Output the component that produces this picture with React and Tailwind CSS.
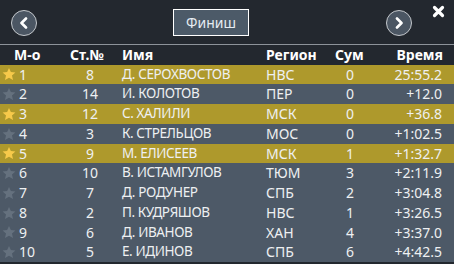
import React from "react";

const rows = [
  { p: 1, n: 8, name: "Д. СЕРОХВОСТОВ", reg: "НВС", sum: 0, time: "25:55.2", gold: true },
  { p: 2, n: 14, name: "И. КОЛОТОВ", reg: "ПЕР", sum: 0, time: "+12.0" },
  { p: 3, n: 12, name: "С. ХАЛИЛИ", reg: "МСК", sum: 0, time: "+36.8", gold: true },
  { p: 4, n: 3, name: "К. СТРЕЛЬЦОВ", reg: "МОС", sum: 0, time: "+1:02.5" },
  { p: 5, n: 9, name: "М. ЕЛИСЕЕВ", reg: "МСК", sum: 1, time: "+1:32.7", gold: true },
  { p: 6, n: 10, name: "В. ИСТАМГУЛОВ", reg: "ТЮМ", sum: 3, time: "+2:11.9" },
  { p: 7, n: 7, name: "Д. РОДУНЕР", reg: "СПБ", sum: 2, time: "+3:04.8" },
  { p: 8, n: 2, name: "П. КУДРЯШОВ", reg: "НВС", sum: 1, time: "+3:26.5" },
  { p: 9, n: 6, name: "Д. ИВАНОВ", reg: "ХАН", sum: 4, time: "+3:37.0" },
  { p: 10, n: 5, name: "Е. ИДИНОВ", reg: "СПБ", sum: 6, time: "+4:42.5" },
];

function Star({ gold }) {
  return (
    <svg width="14" height="14" viewBox="0 0 24 24" className="shrink-0">
      <path
        d="M12 1.5l3.2 7.2 7.8.7-5.9 5.2 1.8 7.7L12 18.3l-6.9 4 1.8-7.7L1 9.4l7.8-.7z"
        fill={gold ? "#f6c94a" : "#65717e"}
      />
    </svg>
  );
}

function Circle({ dir }) {
  return (
    <div className="w-[26px] h-[26px] rounded-full border-[1.5px] border-[#c4c8cc] bg-[#4b5663] flex items-center justify-center">
      <svg width="12" height="12" viewBox="0 0 12 12">
        {dir === "left" ? (
          <path d="M8 1.5L3.5 6 8 10.5" stroke="#ffffff" strokeWidth="2.6" fill="none" strokeLinecap="round" strokeLinejoin="round" />
        ) : (
          <path d="M4 1.5L8.5 6 4 10.5" stroke="#ffffff" strokeWidth="2.6" fill="none" strokeLinecap="round" strokeLinejoin="round" />
        )}
      </svg>
    </div>
  );
}

const grid = "grid grid-cols-[60px_60px_146px_64px_40px_78px]";

export default function App() {
  return (
    <div
      className="w-[454px] h-[264px] overflow-hidden bg-[#23282f] text-[#eef0f2]"
      style={{ fontFamily: '"Noto Sans", "Open Sans", sans-serif' }}
    >
      <div className="relative h-[44px] flex items-center">
        <div className="ml-[11px] mt-[1px]">
          <Circle dir="left" />
        </div>
        <div className="ml-[136px] mt-[1px] w-[76px] h-[27px] border border-white bg-[#4c5a68] flex items-center justify-center text-[14px] text-[#e6ecf2]">
          Финиш
        </div>
        <div className="ml-[137px] mt-[1px]">
          <Circle dir="right" />
        </div>
        <svg className="absolute left-[432px] top-[5px]" width="13" height="13" viewBox="0 0 13 13">
          <path d="M2.5 2.5L10.5 10.5M10.5 2.5L2.5 10.5" stroke="#ffffff" strokeWidth="3.2" strokeLinecap="round" />
        </svg>
      </div>
      <div className="h-[1px] bg-[#8d939a]" />
      <div className={`${grid} h-[19.5px] items-center text-[14px] font-bold text-white leading-none`}>
        <div className="pl-[14px]">М-о</div>
        <div className="pl-[10px]">Ст.№</div>
        <div className="pl-[2px]">Имя</div>
        <div>Регион</div>
        <div className="pl-[5px]">Сум</div>
        <div className="text-right pr-[5px]">Время</div>
      </div>
      {rows.map((r) => (
        <div
          key={r.p}
          className={`${grid} h-[19.75px] text-[14px] leading-[19.75px] ${r.gold ? "bg-[#ae992c]" : "bg-[#4d5967]"}`}
        >
          <div className="flex items-center pl-[2px] gap-[3px]">
            <Star gold={r.gold} />
            <span>{r.p}</span>
          </div>
          <div className="text-center">{r.n}</div>
          <div className="pl-[2px] whitespace-nowrap text-[13.5px] tracking-[-0.4px]">{r.name}</div>
          <div>{r.reg}</div>
          <div className="text-center">{r.sum}</div>
          <div className="text-right pr-[6px]">{r.time}</div>
        </div>
      ))}
    </div>
  );
}
